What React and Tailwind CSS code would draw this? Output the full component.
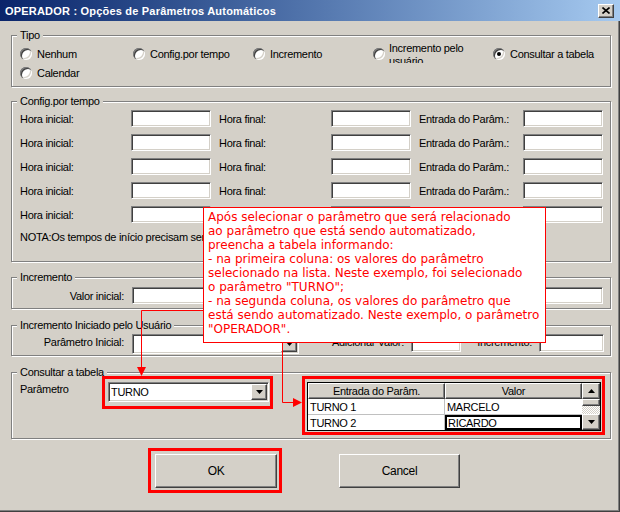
import React from "react";

const sunken =
  "bg-white border border-t-[#808080] border-l-[#808080] border-r-white border-b-white shadow-[inset_1px_1px_0_#404040,inset_-1px_-1px_0_#d4d0c8]";
const raised =
  "bg-[#d4d0c8] border border-t-white border-l-white border-r-[#404040] border-b-[#404040] shadow-[inset_-1px_-1px_0_#808080]";

function Group({ title, className = "", children }) {
  return (
    <fieldset
      className={`ml-[11px] w-[600px] border border-[#808080] shadow-[1px_1px_0_#fff,inset_1px_1px_0_#fff] ${className}`}
    >
      <legend className="ml-[5px] bg-[#d4d0c8] px-[3px] leading-[14px]">{title}</legend>
      {children}
    </fieldset>
  );
}

function Radio({ label, checked, className = "", twoLine }) {
  return (
    <div className={`flex h-[19px] items-center ${className}`}>
      <span className="flex h-[12px] w-[12px] shrink-0 items-center justify-center rounded-full bg-white shadow-[inset_1px_1px_0_#808080,inset_2px_2px_0_#404040,inset_-1px_-1px_0_#fff,inset_-2px_-2px_0_#d4d0c8]">
        {checked && <span className="h-[4px] w-[4px] rounded-full bg-black" />}
      </span>
      {twoLine ? (
        <div className="ml-[4px] h-[19px] w-[95px] overflow-hidden">
          <div className="-mt-[2px] leading-[13px]">{label}</div>
        </div>
      ) : (
        <span className="ml-[5px] whitespace-nowrap">{label}</span>
      )}
    </div>
  );
}

function Arrow() {
  return (
    <svg width="7" height="4" viewBox="0 0 7 4">
      <path d="M0 0h7L3.5 4z" fill="#000" />
    </svg>
  );
}

function Combo({ width, value }) {
  return (
    <div className={`${sunken} ${width} flex h-[20px] items-center justify-between`}>
      <span className="pl-[2px]">{value}</span>
      <div className={`${raised} mr-px flex h-[16px] w-[16px] items-center justify-center`}>
        <Arrow />
      </div>
    </div>
  );
}

function TimeRow() {
  return (
    <div className="flex h-[17px] items-center">
      <span className="w-[111px]">Hora inicial:</span>
      <div className={`${sunken} h-[17px] w-[80px]`} />
      <span className="w-[120px] pl-[8px]">Hora final:</span>
      <div className={`${sunken} h-[17px] w-[80px]`} />
      <span className="w-[112px] pl-[8px]">Entrada do Parâm.:</span>
      <div className={`${sunken} h-[17px] w-[80px]`} />
    </div>
  );
}

const tip = [
  "Após selecionar o parâmetro que será relacionado",
  "ao parâmetro que está sendo automatizado,",
  "preencha a tabela informando:",
  "- na primeira coluna: os valores do parâmetro",
  "selecionado na lista. Neste exemplo, foi selecionado",
  'o parâmetro "TURNO";',
  "- na segunda coluna, os valores do parâmetro que",
  "está sendo automatizado. Neste exemplo, o parâmetro",
  '"OPERADOR".',
];

export default function App() {
  return (
    <div className="relative h-[512px] w-[620px] overflow-hidden bg-[#d4d0c8] font-['Liberation_Sans',Arial,sans-serif] text-[11px] leading-[14px] tracking-[-0.3px] text-black shadow-[inset_-1px_-1px_0_#404040,inset_-2px_-2px_0_#808080]">
      {/* title bar */}
      <div className="flex h-[21px] items-center justify-between bg-linear-to-r from-[#0a246a] to-[#a6caf0] pl-[5px]">
        <span className="font-bold tracking-[0.2px] text-white">OPERADOR : Opções de Parâmetros Automáticos</span>
        <div className={`${raised} mr-[6px] flex h-[14px] w-[16px] items-center justify-center`}>
          <svg width="8" height="7" viewBox="0 0 8 7">
            <path d="M0.5 0.5l7 6M7.5 0.5l-7 6" stroke="#000" strokeWidth="1.6" />
          </svg>
        </div>
      </div>

      <Group title="Tipo" className="mt-[7px] h-[59px]">
        <div className="pl-[8px] pt-[2px]">
          <div className="flex">
            <Radio label="Nenhum" className="w-[113px]" />
            <Radio label="Config.por tempo" className="w-[120px]" />
            <Radio label="Incremento" className="w-[120px]" />
            <Radio label="Incremento pelo usuário" className="w-[120px]" twoLine />
            <Radio label="Consultar a tabela" checked />
          </div>
          <Radio label="Calendar" />
        </div>
      </Group>

      <Group title="Config.por tempo" className="mt-[7px] h-[168px]">
        <div className="flex flex-col gap-[7px] pl-[8px] pt-[2px]">
          <TimeRow />
          <TimeRow />
          <TimeRow />
          <TimeRow />
          <TimeRow />
        </div>
        <p className="mt-[7px] pl-[8px]">NOTA:Os tempos de início precisam ser menores que os tempos finais.</p>
      </Group>

      <Group title="Incremento" className="mt-[8px] h-[39px]">
        <div className="flex items-center pt-[3px]">
          <span className="w-[112px] text-right">Valor inicial:</span>
          <div className={`${sunken} ml-[8px] h-[17px] w-[80px]`} />
          <span className="w-[303px] text-right">Incremento:</span>
          <div className={`${sunken} ml-[8px] h-[17px] w-[80px]`} />
        </div>
      </Group>

      <Group title="Incremento Iniciado pelo Usuário" className="mt-[9px] h-[38px]">
        <div className="flex items-start pt-[2px]">
          <span className="w-[112px] pt-[1px] text-right">Parâmetro Inicial:</span>
          <div className="ml-[8px]">
            <Combo width="w-[167px]" value="" />
          </div>
          <span className="w-[105px] pt-[1px] text-right">Adicionar Valor:</span>
          <div className={`${sunken} ml-[7px] h-[18px] w-[50px]`} />
          <span className="w-[71px] pt-[1px] text-right">Incremento:</span>
          <div className={`${sunken} ml-[7px] h-[18px] w-[65px]`} />
        </div>
      </Group>

      <Group title="Consultar a tabela" className="mt-[9px] h-[74px]">
        <div className="-mt-[3px] flex items-start pl-[8px]">
          <span className="w-[82px] pt-[6px]">Parâmetro</span>
          <div className="h-[33px] w-[171px] border-[3px] border-[#f00] pl-[3px] pt-[3px]">
            <Combo width="w-[161px]" value="TURNO" />
          </div>
          <div className="ml-[29px] h-[59px] w-[303px] border-[3px] border-[#f00] pl-[2px] pt-[3px]">
            <div className="flex h-[49px] w-[294px] border border-black bg-white">
              <div className="w-[137px]">
                <div className={`${raised} flex h-[16px] items-center justify-center`}>Entrada do Parâm.</div>
                <div className="flex h-[16px] items-center border-b border-r border-[#c0c0c0] pl-[2px]">TURNO 1</div>
                <div className="flex h-[15px] items-center border-r border-[#c0c0c0] pl-[2px]">TURNO 2</div>
              </div>
              <div className="w-[137px]">
                <div className={`${raised} flex h-[16px] items-center justify-center`}>Valor</div>
                <div className="flex h-[16px] items-center border-b border-[#c0c0c0] pl-[2px]">MARCELO</div>
                <div className="flex h-[15px] items-center border-2 border-black pl-[1px]">RICARDO</div>
              </div>
              <div className="flex w-[18px] flex-col">
                <div className={`${raised} flex h-[16px] items-center justify-center`}>
                  <svg width="7" height="4" viewBox="0 0 7 4">
                    <path d="M0 4h7L3.5 0z" fill="#000" />
                  </svg>
                </div>
                <div className={`${raised} h-[7px]`} />
                <div className="h-[8px] bg-[repeating-conic-gradient(#fff_0_25%,#d4d0c8_0_50%)] bg-size-[2px_2px]" />
                <div className={`${raised} flex h-[16px] items-center justify-center`}>
                  <Arrow />
                </div>
              </div>
            </div>
          </div>
        </div>
      </Group>

      <div className="mt-[9px] flex items-start">
        <div className="ml-[148px] h-[45px] w-[134px] border-[3px] border-[#f00] pl-[4px] pt-[3px]">
          <button className={`${raised} h-[34px] w-[122px] text-[12px]`}>OK</button>
        </div>
        <button className={`${raised} ml-[57px] mt-[6px] h-[34px] w-[121px] text-[12px]`}>Cancel</button>
      </div>

      {/* annotation arrows */}
      <svg className="pointer-events-none absolute left-0 top-0" width="620" height="512">
        <path d="M203 310.5H141.5V368" stroke="#f00" fill="none" />
        <polygon points="137,367 146,367 141.5,376" fill="#f00" />
        <path d="M282.5 342V402.5H294" stroke="#f00" fill="none" />
        <polygon points="293,398 293,407 302,402.5" fill="#f00" />
      </svg>

      {/* callout */}
      <div className="absolute left-[203px] top-[207px] h-[136px] w-[343px] whitespace-nowrap border border-[#f00] bg-white pl-[4px] pt-[2px] font-['DejaVu_Sans',sans-serif] text-[12px] leading-[14px] tracking-normal text-[#f00]">
        {tip.map((line) => (
          <div key={line}>{line}</div>
        ))}
      </div>
    </div>
  );
}
